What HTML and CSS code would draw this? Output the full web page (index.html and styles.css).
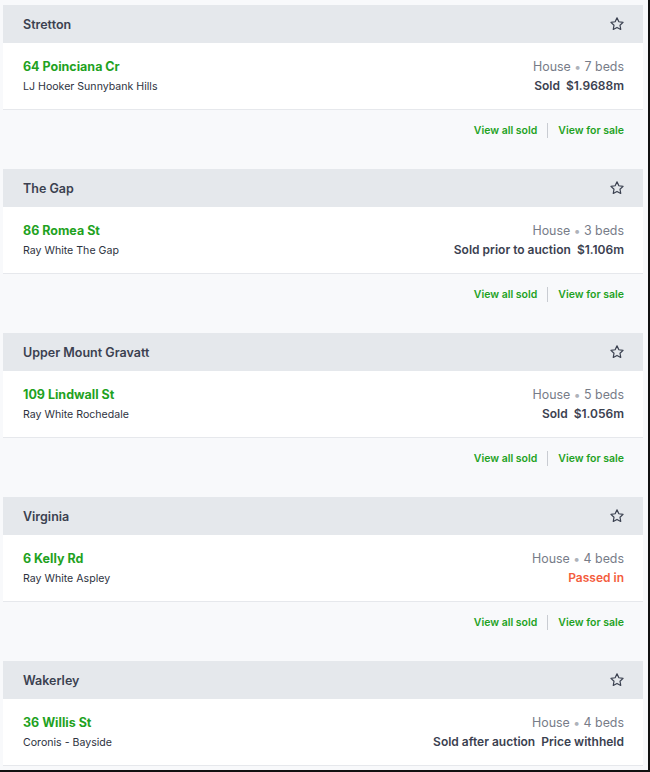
FILE: index.html
```html
<!DOCTYPE html>
<html lang="en">
<head>
    <meta charset="UTF-8">
    <title>Saved suburbs</title>
    <link rel="stylesheet" href="styles.css">
</head>
<body>
    <div class="frame">
        <div class="suburb">
            <div class="suburb-head">
                <span class="suburb-name">Stretton</span>
                <svg class="star" viewBox="0 0 24 24"><path d="M12 2.8l2.8 5.8 6.3.9-4.6 4.4 1.1 6.3L12 17.2l-5.6 3 1.1-6.3-4.6-4.4 6.3-.9z"/></svg>
            </div>
            <div class="listing">
                <div>
                    <div class="address">64 Poinciana Cr</div>
                    <div class="agency">LJ Hooker Sunnybank Hills</div>
                </div>
                <div class="details">
                    <div class="type">House <span class="dot">&bull;</span> 7 beds</div>
                    <div class="result">Sold <span class="price">$1.9688m</span></div>
                </div>
            </div>
            <div class="links">
                <a href="#">View all sold</a>
                <span class="sep"></span>
                <a href="#">View for sale</a>
            </div>
        </div>

        <div class="suburb">
            <div class="suburb-head">
                <span class="suburb-name">The Gap</span>
                <svg class="star" viewBox="0 0 24 24"><path d="M12 2.8l2.8 5.8 6.3.9-4.6 4.4 1.1 6.3L12 17.2l-5.6 3 1.1-6.3-4.6-4.4 6.3-.9z"/></svg>
            </div>
            <div class="listing">
                <div>
                    <div class="address">86 Romea St</div>
                    <div class="agency">Ray White The Gap</div>
                </div>
                <div class="details">
                    <div class="type">House <span class="dot">&bull;</span> 3 beds</div>
                    <div class="result">Sold prior to auction <span class="price">$1.106m</span></div>
                </div>
            </div>
            <div class="links">
                <a href="#">View all sold</a>
                <span class="sep"></span>
                <a href="#">View for sale</a>
            </div>
        </div>

        <div class="suburb">
            <div class="suburb-head">
                <span class="suburb-name">Upper Mount Gravatt</span>
                <svg class="star" viewBox="0 0 24 24"><path d="M12 2.8l2.8 5.8 6.3.9-4.6 4.4 1.1 6.3L12 17.2l-5.6 3 1.1-6.3-4.6-4.4 6.3-.9z"/></svg>
            </div>
            <div class="listing">
                <div>
                    <div class="address">109 Lindwall St</div>
                    <div class="agency">Ray White Rochedale</div>
                </div>
                <div class="details">
                    <div class="type">House <span class="dot">&bull;</span> 5 beds</div>
                    <div class="result">Sold <span class="price">$1.056m</span></div>
                </div>
            </div>
            <div class="links">
                <a href="#">View all sold</a>
                <span class="sep"></span>
                <a href="#">View for sale</a>
            </div>
        </div>

        <div class="suburb">
            <div class="suburb-head">
                <span class="suburb-name">Virginia</span>
                <svg class="star" viewBox="0 0 24 24"><path d="M12 2.8l2.8 5.8 6.3.9-4.6 4.4 1.1 6.3L12 17.2l-5.6 3 1.1-6.3-4.6-4.4 6.3-.9z"/></svg>
            </div>
            <div class="listing">
                <div>
                    <div class="address">6 Kelly Rd</div>
                    <div class="agency">Ray White Aspley</div>
                </div>
                <div class="details">
                    <div class="type">House <span class="dot">&bull;</span> 4 beds</div>
                    <div class="result passed">Passed in</div>
                </div>
            </div>
            <div class="links">
                <a href="#">View all sold</a>
                <span class="sep"></span>
                <a href="#">View for sale</a>
            </div>
        </div>

        <div class="suburb">
            <div class="suburb-head">
                <span class="suburb-name">Wakerley</span>
                <svg class="star" viewBox="0 0 24 24"><path d="M12 2.8l2.8 5.8 6.3.9-4.6 4.4 1.1 6.3L12 17.2l-5.6 3 1.1-6.3-4.6-4.4 6.3-.9z"/></svg>
            </div>
            <div class="listing">
                <div>
                    <div class="address">36 Willis St</div>
                    <div class="agency">Coronis - Bayside</div>
                </div>
                <div class="details">
                    <div class="type">House <span class="dot">&bull;</span> 4 beds</div>
                    <div class="result">Sold after auction <span class="price">Price withheld</span></div>
                </div>
            </div>
        </div>
    </div>
</body>
</html>
```

FILE: styles.css
```css
html, body {
    margin: 0;
    padding: 0;
    background: #000;
}

.frame {
    box-sizing: border-box;
    width: 650px;
    height: 772px;
    overflow: hidden;
    border-right: 2px solid #111;
    border-bottom: 2px solid #111;
    background: #f8f9fb;
    padding: 5px 5px 0 3px;
    font-family: Inter, "Liberation Sans", sans-serif;
}

.suburb {
    margin-bottom: 19px;
}

.suburb-head {
    display: flex;
    align-items: center;
    justify-content: space-between;
    height: 38px;
    padding: 0 18px 0 20px;
    background: #e5e8ec;
}

.suburb-name {
    font-size: 12.5px;
    font-weight: 600;
    color: #3b4150;
}

.star {
    width: 16px;
    height: 16px;
    fill: none;
    stroke: #3b4150;
    stroke-width: 1.8;
    stroke-linejoin: round;
}

.listing {
    display: flex;
    justify-content: space-between;
    height: 67px;
    box-sizing: border-box;
    padding: 15px 19px 0 20px;
    background: #fff;
    border-bottom: 1px solid #e6e8ec;
}

.address {
    font-size: 12.5px;
    font-weight: 700;
    color: #1fa21f;
    line-height: 18px;
}

.agency {
    margin-top: 2px;
    font-size: 10.6px;
    color: #2e3341;
    line-height: 17px;
}

.details {
    text-align: right;
}

.type {
    font-size: 12.4px;
    color: #777c88;
    line-height: 18px;
}

.dot {
    color: #aeb2ba;
    font-size: 12px;
}

.result {
    margin-top: 1px;
    font-size: 12px;
    font-weight: 600;
    color: #3b4150;
    line-height: 17px;
}

.price {
    margin-left: 3px;
}

.passed {
    color: #f45d3d;
}

.links {
    display: flex;
    justify-content: flex-end;
    align-items: center;
    box-sizing: border-box;
    height: 40px;
    padding: 0 19px;
}

.links a {
    font-size: 10.5px;
    font-weight: 600;
    color: #1fa21f;
    text-decoration: none;
}

.sep {
    width: 1px;
    height: 15px;
    margin: 0 10px;
    background: #c9ccd2;
}
```
